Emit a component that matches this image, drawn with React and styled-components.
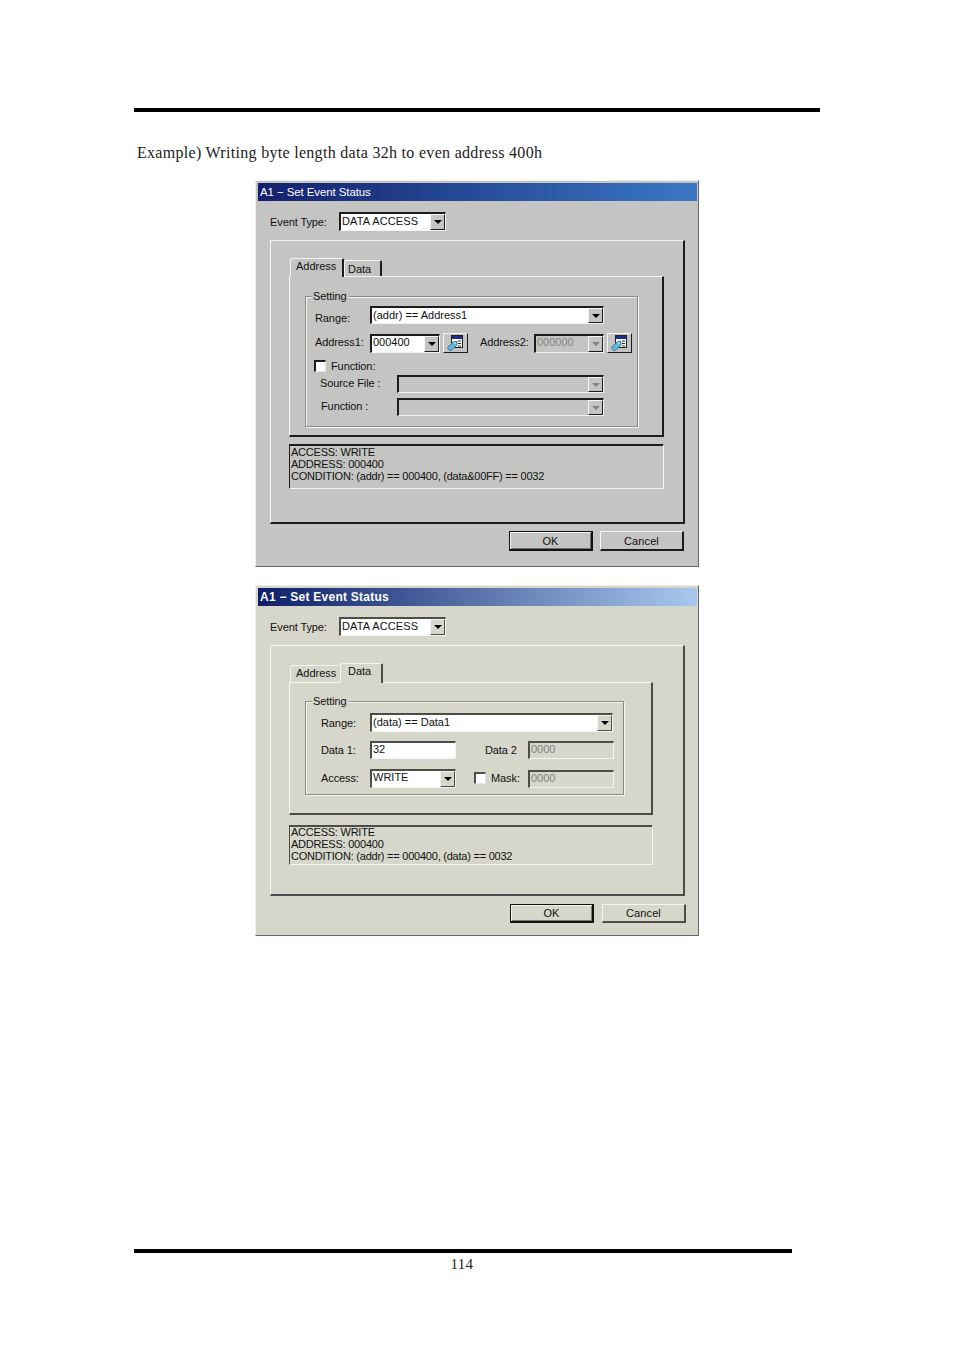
import styled, { createGlobalStyle, ThemeProvider } from 'styled-components';

const classic = {
    face: '#c4c4c2',
    dark: '#1c1c1c',
    shadow: '#6f6f6f',
    titleFrom: '#14206e',
    titleTo: '#3a78c4',
    titleWeight: 400,
    titleSize: '11.5px',
    titleSpacing: '-0.1px',
};

const luna = {
    face: '#d6d6ca',
    dark: '#4c4c48',
    shadow: '#7a7a74',
    titleFrom: '#0c1f68',
    titleTo: '#a8c8ee',
    titleWeight: 700,
    titleSize: '12px',
    titleSpacing: '0.25px',
};

const GlobalStyle = createGlobalStyle`
body {
    margin: 0;
    background: #fff;
}
`

const Page = styled.div`
width: 954px;
height: 1350px;
box-sizing: border-box;
padding: 108px 0 0 134px;
overflow: hidden;
font-family: "Liberation Sans", Arial, sans-serif;
`

const Rule = styled.div`
width: ${props => props.$width}px;
height: 4px;
margin-top: ${props => props.$top || 0}px;
background: #000;
`

const Caption = styled.p`
margin: 31px 0 0 3px;
font-family: "Liberation Serif", "Times New Roman", serif;
font-size: 16px;
line-height: 20px;
letter-spacing: 0.3px;
color: #222;
`

const PageNumber = styled.div`
width: 656px;
margin-top: 2px;
text-align: center;
font-family: "Liberation Serif", "Times New Roman", serif;
font-size: 15px;
line-height: 18px;
letter-spacing: 0.3px;
color: #222;
`

const Dialog = styled.div`
width: 444px;
height: ${props => props.$height}px;
box-sizing: border-box;
margin: ${props => props.$top}px 0 0 121px;
padding: 2px 1px 0 2px;
background: ${props => props.theme.face};
border: 1px solid;
border-color: #efefef #666 #666 #efefef;
font-size: 11px;
letter-spacing: -0.1px;
color: #111;
`

const TitleBar = styled.div`
height: 18px;
padding-left: 2px;
line-height: 18px;
font-size: ${props => props.theme.titleSize};
font-weight: ${props => props.theme.titleWeight};
letter-spacing: ${props => props.theme.titleSpacing};
color: #fff;
background: linear-gradient(90deg, ${props => props.theme.titleFrom}, ${props => props.theme.titleTo});
`

const TypeRow = styled.div`
display: flex;
align-items: center;
padding: 11px 0 0 12px;
`

const Panel = styled.div`
width: 415px;
height: ${props => props.$height}px;
box-sizing: border-box;
margin: 9px 0 0 12px;
padding: 17px 0 0 18px;
border: solid;
border-width: 1px 2px 2px 1px;
border-color: #f4f4f4 ${props => props.theme.dark} ${props => props.theme.dark} #f4f4f4;
`

const TabStrip = styled.div`
display: flex;
align-items: flex-end;
padding-left: 1px;
`

const Tab = styled.div`
position: relative;
z-index: ${props => props.$active ? 1 : 0};
width: ${props => props.$width}px;
height: ${props => props.$height}px;
box-sizing: border-box;
margin-bottom: ${props => props.$active ? -1 : 0}px;
padding: ${props => props.$padTop}px 0 0 ${props => props.$pad}px;
background: ${props => props.theme.face};
border: solid;
border-width: 1px 2px 0 1px;
border-color: #f4f4f4 ${props => props.$dim ? 'transparent' : props.theme.dark} transparent #f4f4f4;
border-radius: 3px 2px 0 0;
font-size: 11px;
line-height: 14px;
letter-spacing: 0;
`

const TabPanel = styled.div`
width: ${props => props.$width}px;
height: ${props => props.$height}px;
box-sizing: border-box;
padding: ${props => props.$padTop}px 0 0 15px;
border: solid;
border-width: 1px 2px 2px 1px;
border-color: #f4f4f4 ${props => props.theme.dark} ${props => props.theme.dark} #f4f4f4;
`

const FieldBox = styled.div`
position: relative;
width: ${props => props.$width}px;
height: ${props => props.$height}px;
box-sizing: border-box;
padding: ${props => props.$padTop}px 0 0 ${props => props.$padLeft}px;
border: 1px solid #8b8b86;
box-shadow: 1px 1px 0 #f4f4f4, inset 1px 1px 0 #f4f4f4;
`

const Legend = styled.span`
position: absolute;
top: -8px;
left: 6px;
padding: 0 2px 0 1px;
line-height: 14px;
background: ${props => props.theme.face};
`

const Row = styled.div`
display: flex;
align-items: center;
margin: ${props => props.$top || 0}px 0 0 ${props => props.$left || 0}px;
`

const Label = styled.span`
flex: none;
width: ${props => props.$width}px;
margin-left: ${props => props.$left || 0}px;
padding: ${props => props.$drop || 0}px 0 ${props => props.$rise || 0}px;
white-space: nowrap;
`

const FieldFrame = styled.div`
flex: none;
position: relative;
display: flex;
align-items: center;
width: ${props => props.$width}px;
height: ${props => props.$height || 18}px;
box-sizing: border-box;
margin-top: ${props => props.$offset || 0}px;
padding: 0 0 ${props => props.$lift ? 4 : 2}px 1px;
background: ${props => props.$off ? props.theme.face : '#fff'};
border: solid;
border-width: 2px 1px 1px 2px;
border-color: ${props => props.theme.dark} #f4f4f4 #f4f4f4 ${props => props.theme.dark};
color: ${props => props.$off ? '#84847f' : '#111'};
font-size: 11px;
white-space: nowrap;
letter-spacing: ${props => props.$spacing || '0'};
`

const ArrowButton = styled.span`
position: absolute;
top: 0;
right: 0;
bottom: 0;
width: 15px;
box-sizing: border-box;
display: flex;
align-items: center;
justify-content: center;
background: ${props => props.theme.face};
border: 1px solid;
border-color: #f4f4f4 ${props => props.theme.dark} ${props => props.theme.dark} #f4f4f4;
&::after {
    content: "";
    border: 4px solid transparent;
    border-bottom-width: 0;
    border-top-color: ${props => props.$off ? '#85857f' : '#000'};
}
`

const PickerButton = styled.span`
flex: none;
display: flex;
align-items: center;
justify-content: center;
width: 25px;
height: 20px;
box-sizing: border-box;
margin-left: 3px;
background: ${props => props.theme.face};
border: 1px solid;
border-color: #f4f4f4 ${props => props.theme.dark} ${props => props.theme.dark} #f4f4f4;
`

const CheckBox = styled.span`
flex: none;
width: 12px;
height: 12px;
box-sizing: border-box;
margin: 0 5px 0 ${props => props.$left || 0}px;
background: #fff;
border: solid;
border-width: 2px 1px 1px 2px;
border-color: ${props => props.theme.dark} #e8e8e8 #e8e8e8 ${props => props.theme.dark};
`

const StatusBox = styled.div`
width: ${props => props.$width}px;
height: ${props => props.$height}px;
box-sizing: border-box;
margin-top: ${props => props.$top}px;
padding: ${props => props.$padTop}px 0 0 1px;
border: solid;
border-width: 1px;
border-color: ${props => props.theme.dark} #f4f4f4 #f4f4f4 ${props => props.theme.dark};
box-shadow: inset 0 1px 0 ${props => props.theme.dark};
font-size: 11px;
line-height: 12px;
`

const StatusLine = styled.div`
white-space: nowrap;
letter-spacing: -0.23px;
color: #111;
`

const ButtonRow = styled.div`
display: flex;
gap: ${props => props.$gap}px;
margin: ${props => props.$top}px 0 0 ${props => props.$left}px;
`

const PushButton = styled.div`
width: 84px;
height: ${props => props.$height}px;
box-sizing: border-box;
display: flex;
align-items: center;
justify-content: center;
border: solid;
border-width: 1px 2px 2px 1px;
border-color: ${props => props.$primary ? '#111' : '#f4f4f4'} ${props => props.$primary ? '#111' : props.theme.dark} ${props => props.$primary ? '#111' : props.theme.dark} ${props => props.$primary ? '#111' : '#f4f4f4'};
box-shadow: ${props => props.$primary ? `inset 1px 1px 0 #f4f4f4, inset -1px -1px 0 ${props.theme.shadow}` : 'none'};
font-size: 11px;
letter-spacing: 0.1px;
`

// small window with a tag over it, same drawing on both address rows
const PickerIcon = () => (
    <svg width="17" height="16" viewBox="0 0 17 16">
        <rect x="4.5" y="0.5" width="11" height="12" fill="#fff" stroke="#222" />
        <rect x="5" y="1" width="10" height="3" fill="#1c2f8c" />
        <path d="M11 6h3M11 8.5h3M11 11h3" stroke="#333" />
        <path d="M0.5 12.5 6.5 6.5h3.5v3.5l-6 6h-1z" fill="#62b6da" stroke="#2a6c90" strokeWidth="0.8" />
        <circle cx="8" cy="8" r="0.8" fill="#fff" />
    </svg>
);

const Combo = ({ width, height, text, off, offset, spacing, lift }) => (
    <FieldFrame $width={width} $height={height} $off={off} $offset={offset} $spacing={spacing} $lift={lift}>
        {text}
        <ArrowButton $off={off} />
    </FieldFrame>
);

const EventType = () => (
    <TypeRow>
        <Label $width={69}>Event Type:</Label>
        <Combo width={107} height={19} spacing="0.13px" text="DATA ACCESS" />
    </TypeRow>
);

const Status = ({ width, height, top, padTop, condition }) => (
    <StatusBox $width={width} $height={height} $top={top} $padTop={padTop}>
        <StatusLine>ACCESS: WRITE</StatusLine>
        <StatusLine>ADDRESS: 000400</StatusLine>
        <StatusLine>CONDITION: {condition}</StatusLine>
    </StatusBox>
);

const AddressDialog = () => (
    <ThemeProvider theme={classic}>
        <Dialog $top={17} $height={387}>
            <TitleBar>A1 − Set Event Status</TitleBar>
            <EventType />
            <Panel $height={284}>
                <TabStrip>
                    <Tab $active $width={54} $height={19} $pad={5} $padTop={0}>Address</Tab>
                    <Tab $width={38} $height={16} $pad={3} $padTop={1}>Data</Tab>
                </TabStrip>
                <TabPanel $width={375} $height={161} $padTop={19}>
                    <FieldBox $width={333} $height={131} $padTop={9} $padLeft={9}>
                        <Legend>Setting</Legend>
                        <Row>
                            <Label $width={55} $drop={6}>Range:</Label>
                            <Combo width={234} text="(addr) == Address1" />
                        </Row>
                        <Row $top={9}>
                            <Label $width={55} $rise={2}>Address1:</Label>
                            <Combo width={70} height={19} text="000400" lift />
                            <PickerButton><PickerIcon /></PickerButton>
                            <Label $width={54} $left={12} $rise={2}>Address2:</Label>
                            <Combo width={70} height={19} text="000000" off lift />
                            <PickerButton><PickerIcon /></PickerButton>
                        </Row>
                        <Row $top={7} $left={-1}>
                            <CheckBox />
                            <Label $width={60}>Function:</Label>
                        </Row>
                        <Row $top={3} $left={5}>
                            <Label $width={77} $rise={2}>Source File :</Label>
                            <Combo width={207} off />
                        </Row>
                        <Row $top={5} $left={6}>
                            <Label $width={76} $rise={2}>Function :</Label>
                            <Combo width={207} off />
                        </Row>
                    </FieldBox>
                </TabPanel>
                <Status width={375} height={45} top={7} padTop={1} condition="(addr) == 000400, (data&00FF) == 0032" />
            </Panel>
            <ButtonRow $top={7} $left={251} $gap={7}>
                <PushButton $primary $height={20}>OK</PushButton>
                <PushButton $height={20}>Cancel</PushButton>
            </ButtonRow>
        </Dialog>
    </ThemeProvider>
);

const DataDialog = () => (
    <ThemeProvider theme={luna}>
        <Dialog $top={18} $height={351}>
            <TitleBar>A1 − Set Event Status</TitleBar>
            <EventType />
            <Panel $height={251}>
                <TabStrip>
                    <Tab $dim $width={50} $height={17} $pad={5} $padTop={0}>Address</Tab>
                    <Tab $active $width={43} $height={20} $pad={7} $padTop={0}>Data</Tab>
                </TabStrip>
                <TabPanel $width={364} $height={133} $padTop={18}>
                    <FieldBox $width={319} $height={94} $padTop={11} $padLeft={15}>
                        <Legend>Setting</Legend>
                        <Row>
                            <Label $width={49}>Range:</Label>
                            <Combo width={243} height={19} text="(data) == Data1" />
                        </Row>
                        <Row $top={9}>
                            <Label $width={49}>Data 1:</Label>
                            <FieldFrame $width={86} $lift>32</FieldFrame>
                            <Label $width={43} $left={29}>Data 2</Label>
                            <FieldFrame $width={86} $off $lift>0000</FieldFrame>
                        </Row>
                        <Row $top={9}>
                            <Label $width={49}>Access:</Label>
                            <Combo width={86} height={19} text="WRITE" lift />
                            <CheckBox $left={18} />
                            <Label $width={37}>Mask:</Label>
                            <FieldFrame $width={86} $off $offset={2} $lift>0000</FieldFrame>
                        </Row>
                    </FieldBox>
                </TabPanel>
                <Status width={364} height={40} top={10} padTop={0} condition="(addr) == 000400, (data) == 0032" />
            </Panel>
            <ButtonRow $top={8} $left={252} $gap={8}>
                <PushButton $primary $height={19}>OK</PushButton>
                <PushButton $height={19}>Cancel</PushButton>
            </ButtonRow>
        </Dialog>
    </ThemeProvider>
);

const App = () => {
    return (
        <Page>
            <GlobalStyle />
            <Rule $width={686} />
            <Caption>Example) Writing byte length data 32h to even address 400h</Caption>
            <AddressDialog />
            <DataDialog />
            <Rule $width={658} $top={313} />
            <PageNumber>114</PageNumber>
        </Page>
    )
}

export default App
